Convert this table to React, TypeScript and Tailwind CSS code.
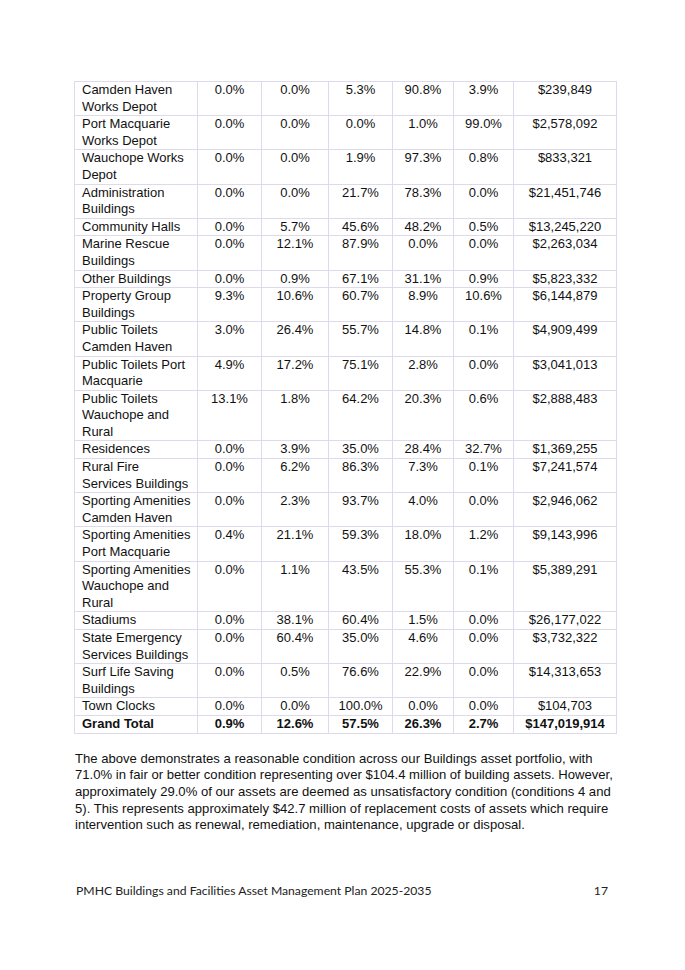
const rows: [string, string, string, string, string, string, string][] = [
  ["Camden Haven Works Depot", "0.0%", "0.0%", "5.3%", "90.8%", "3.9%", "$239,849"],
  ["Port Macquarie Works Depot", "0.0%", "0.0%", "0.0%", "1.0%", "99.0%", "$2,578,092"],
  ["Wauchope Works Depot", "0.0%", "0.0%", "1.9%", "97.3%", "0.8%", "$833,321"],
  ["Administration Buildings", "0.0%", "0.0%", "21.7%", "78.3%", "0.0%", "$21,451,746"],
  ["Community Halls", "0.0%", "5.7%", "45.6%", "48.2%", "0.5%", "$13,245,220"],
  ["Marine Rescue Buildings", "0.0%", "12.1%", "87.9%", "0.0%", "0.0%", "$2,263,034"],
  ["Other Buildings", "0.0%", "0.9%", "67.1%", "31.1%", "0.9%", "$5,823,332"],
  ["Property Group Buildings", "9.3%", "10.6%", "60.7%", "8.9%", "10.6%", "$6,144,879"],
  ["Public Toilets Camden Haven", "3.0%", "26.4%", "55.7%", "14.8%", "0.1%", "$4,909,499"],
  ["Public Toilets Port Macquarie", "4.9%", "17.2%", "75.1%", "2.8%", "0.0%", "$3,041,013"],
  ["Public Toilets Wauchope and Rural", "13.1%", "1.8%", "64.2%", "20.3%", "0.6%", "$2,888,483"],
  ["Residences", "0.0%", "3.9%", "35.0%", "28.4%", "32.7%", "$1,369,255"],
  ["Rural Fire\nServices Buildings", "0.0%", "6.2%", "86.3%", "7.3%", "0.1%", "$7,241,574"],
  ["Sporting Amenities Camden Haven", "0.0%", "2.3%", "93.7%", "4.0%", "0.0%", "$2,946,062"],
  ["Sporting Amenities Port Macquarie", "0.4%", "21.1%", "59.3%", "18.0%", "1.2%", "$9,143,996"],
  ["Sporting Amenities Wauchope and Rural", "0.0%", "1.1%", "43.5%", "55.3%", "0.1%", "$5,389,291"],
  ["Stadiums", "0.0%", "38.1%", "60.4%", "1.5%", "0.0%", "$26,177,022"],
  ["State Emergency Services Buildings", "0.0%", "60.4%", "35.0%", "4.6%", "0.0%", "$3,732,322"],
  ["Surf Life Saving Buildings", "0.0%", "0.5%", "76.6%", "22.9%", "0.0%", "$14,313,653"],
  ["Town Clocks", "0.0%", "0.0%", "100.0%", "0.0%", "0.0%", "$104,703"],
]

const total = ["Grand Total", "0.9%", "12.6%", "57.5%", "26.3%", "2.7%", "$147,019,914"]

// line breaks kept as in the source document
const paragraph = [
  "The above demonstrates a reasonable condition across our Buildings asset portfolio, with",
  "71.0% in fair or better condition representing over $104.4 million of building assets. However,",
  "approximately 29.0% of our assets are deemed as unsatisfactory condition (conditions 4 and",
  "5). This represents approximately $42.7 million of replacement costs of assets which require",
  "intervention such as renewal, remediation, maintenance, upgrade or disposal.",
]

export default function App() {
  return (
    <div className="w-[685px] h-[970px] bg-white relative font-['Liberation_Sans',Arial,sans-serif] text-[#111]">
      <div className="pt-[81px] pl-[74px]">
        <table className="table-fixed border-collapse text-[13px] leading-[16.6px]">
          <colgroup>
            <col className="w-[123px]" />
            <col className="w-[64px]" />
            <col className="w-[67px]" />
            <col className="w-[64px]" />
            <col className="w-[61px]" />
            <col className="w-[60px]" />
            <col className="w-[103px]" />
          </colgroup>
          <tbody>
            {rows.map((r) => (
              <tr key={r[0]}>
                {r.map((c, i) => (
                  <td
                    key={i}
                    className={`border border-[#dedaeb] align-top p-0 ${i === 0 ? "pl-[7px] pr-[4px] text-left whitespace-pre-line" : "text-center"}`}
                  >
                    {c}
                  </td>
                ))}
              </tr>
            ))}
            <tr>
              {total.map((c, i) => (
                <td
                  key={i}
                  className={`border border-[#dedaeb] align-top p-0 font-bold ${i === 0 ? "pl-[7px] pr-[4px] text-left" : "text-center"}`}
                >
                  {c}
                </td>
              ))}
            </tr>
          </tbody>
        </table>
        <p className="mt-[17px] ml-[1px] text-[13.1px] leading-[16.7px]">
          {paragraph.map((line) => (
            <span key={line} className="block whitespace-nowrap">
              {line}
            </span>
          ))}
        </p>
      </div>
      <div className="absolute left-[76px] w-[532px] top-[882px] flex justify-between font-['Lato',sans-serif] text-[12.2px] text-[#222]">
        <span>PMHC Buildings and Facilities Asset Management Plan 2025-2035</span>
        <span>17</span>
      </div>
    </div>
  )
}
